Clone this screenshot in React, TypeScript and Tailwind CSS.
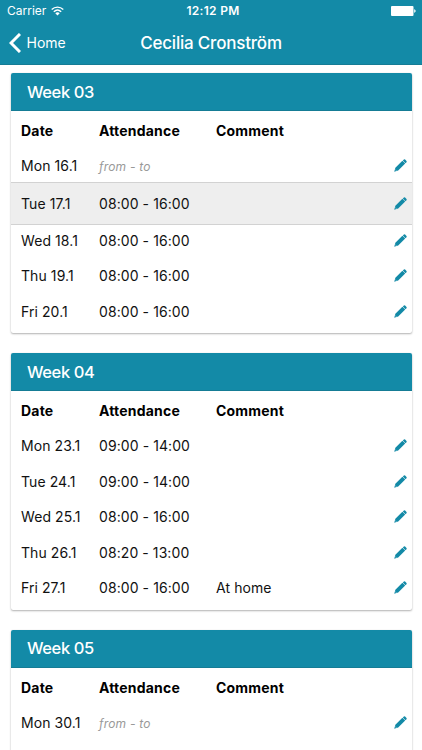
import clsx from "clsx";

const weeks = [
  {
    title: "Week 03",
    days: [
      { date: "Mon 16.1", time: "", comment: "" },
      { date: "Tue 17.1", time: "08:00 - 16:00", comment: "", active: true },
      { date: "Wed 18.1", time: "08:00 - 16:00", comment: "" },
      { date: "Thu 19.1", time: "08:00 - 16:00", comment: "" },
      { date: "Fri 20.1", time: "08:00 - 16:00", comment: "" },
    ],
  },
  {
    title: "Week 04",
    days: [
      { date: "Mon 23.1", time: "09:00 - 14:00", comment: "" },
      { date: "Tue 24.1", time: "09:00 - 14:00", comment: "" },
      { date: "Wed 25.1", time: "08:00 - 16:00", comment: "" },
      { date: "Thu 26.1", time: "08:20 - 13:00", comment: "" },
      { date: "Fri 27.1", time: "08:00 - 16:00", comment: "At home" },
    ],
  },
  {
    title: "Week 05",
    days: [{ date: "Mon 30.1", time: "", comment: "" }],
  },
];

type Week = (typeof weeks)[number];

function WifiIcon() {
  return (
    <svg viewBox="0 0 13 10" className="w-[13px] h-[10px]" fill="none" stroke="white" strokeWidth="1.4">
      <path d="M0.7 3.6C4 0.3 9 0.3 12.3 3.6" />
      <path d="M2.8 5.7C5 3.6 8 3.6 10.2 5.7" />
      <path d="M6.5 9.4L4.3 7.2C5.6 6 7.4 6 8.7 7.2Z" fill="white" stroke="none" />
    </svg>
  );
}

function BatteryIcon() {
  return (
    <svg viewBox="0 0 25 10" className="w-[25px] h-[10px]" fill="white">
      <rect width="22.5" height="10" rx="1" />
      <path d="M23.2 3.3C25.1 3.7 25.1 6.3 23.2 6.7Z" />
    </svg>
  );
}

function PencilIcon() {
  return (
    <svg viewBox="0 0 13 13" className="w-[13px] h-[13px]" fill="#138aa7">
      <path d="M8.8 1.5L11.5 4.2L12.5 3.2Q13 2.5 12.5 1.9L11.1 0.5Q10.5 0 9.9 0.4Z" />
      <path d="M8.4 1.8L11.2 4.6L4.2 11.5L0.2 12.8L1.4 8.8Z" />
      <path d="M1.1 10.4L2.6 11.9" stroke="white" strokeWidth="0.4" />
    </svg>
  );
}

function WeekCard({ week }: { week: Week }) {
  return (
    <section className="shrink-0 rounded-[2px] bg-white pb-1 last:pb-10 shadow-[0_1px_2px_rgba(0,0,0,0.3),0_0_1px_rgba(0,0,0,0.1)]">
      <h2 className="flex h-[38px] items-center rounded-t-[2px] border-b border-[#157c95] bg-[#138aa7] pt-px pl-4 text-[16.5px] font-[450] tracking-[-0.4px] text-white">
        {week.title}
      </h2>
      <div className="flex h-[36.6px] items-center pt-[2px] pl-2.5 text-[14px] font-bold tracking-[0.2px] text-black">
        <span className="w-[78px]">Date</span>
        <span className="w-[117px]">Attendance</span>
        <span>Comment</span>
      </div>
      {week.days.map((day) => (
        <div
          key={day.date}
          className={clsx(
            "flex items-center pl-2.5 pr-[5px] text-[14px] tracking-[0.08px] text-[#111]",
            "active" in day && day.active
              ? "-mt-[1.2px] -mb-[2.4px] h-[42.8px] border-y border-[#d2d2d2] bg-[#eee]"
              : "h-[35.6px]"
          )}
        >
          <span className="w-[78px]">{day.date}</span>
          <span className="w-[117px]">
            {day.time || <i className="text-[12px] tracking-[0.2px] text-[#999]">from - to</i>}
          </span>
          <span className="flex-1">{day.comment}</span>
          <PencilIcon />
        </div>
      ))}
    </section>
  );
}

export default function App() {
  return (
    <div className="flex h-[750px] w-[422px] flex-col overflow-hidden bg-white font-['Inter',sans-serif]">
      <header className="h-[65px] shrink-0 border-b border-[#157c95] bg-[#138aa7] text-white">
        <div className="grid h-[22px] grid-cols-[1fr_auto_1fr] items-center pl-[7px] pr-[6px] text-[12px]">
          <div className="flex items-center gap-[5px]">
            <span>Carrier</span>
            <WifiIcon />
          </div>
          <span className="pl-[3px] text-[12px] font-semibold tracking-[0.3px]">12:12 PM</span>
          <div className="flex justify-end">
            <BatteryIcon />
          </div>
        </div>
        <div className="grid h-[42px] grid-cols-[1fr_auto_1fr] items-center">
          <div className="flex items-center gap-[6px] pl-[8.5px] text-[14px]">
            <svg viewBox="0 0 12 20" className="h-5 w-3" fill="none" stroke="white" strokeWidth="3">
              <path d="M11 1L2 10L11 19" />
            </svg>
            <span className="-mt-px">Home</span>
          </div>
          <h1 className="pt-[2px] text-[17px] font-medium tracking-[-0.2px]">Cecilia Cronström</h1>
        </div>
      </header>
      <main className="flex min-h-0 flex-1 flex-col gap-5 overflow-hidden pt-2 pl-[11px] pr-[10.5px]">
        {weeks.map((week) => (
          <WeekCard key={week.title} week={week} />
        ))}
      </main>
    </div>
  );
}
